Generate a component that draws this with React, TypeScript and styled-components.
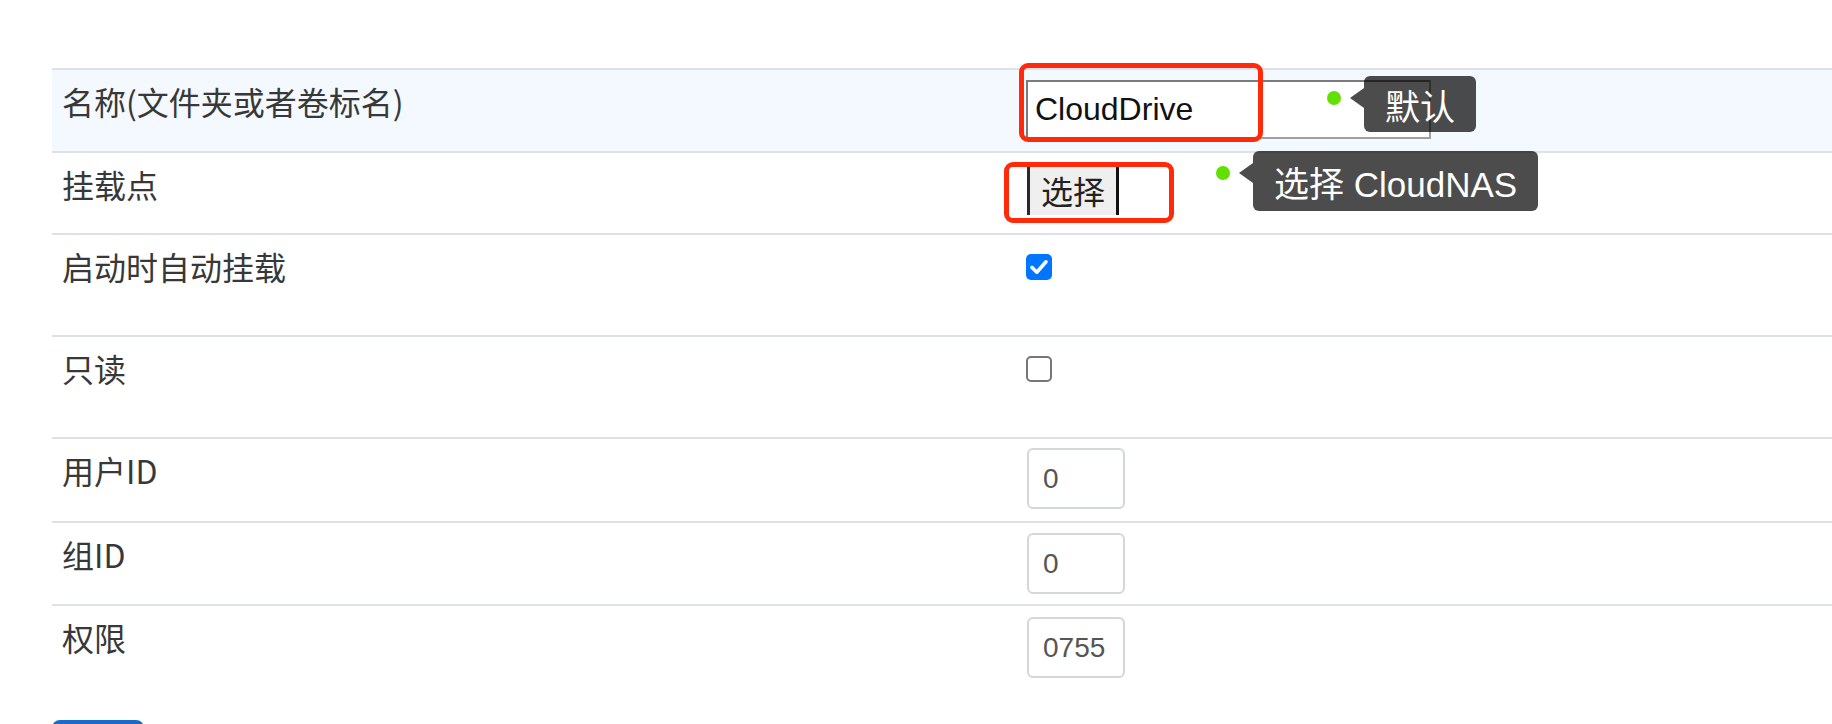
import React from 'react';
import styled, { createGlobalStyle } from 'styled-components';

const GlobalStyle = createGlobalStyle`
  html, body {
    margin: 0;
    padding: 0;
    background: #fff;
    overflow: hidden;
  }
`;

type Field =
  | { kind: 'text'; label: string; value: string }
  | { kind: 'picker'; label: string }
  | { kind: 'check'; label: string; checked: boolean }
  | { kind: 'number'; label: string; value: string };

// each row: field, row height (incl. top border), value padding-top
const ROWS: { field: Field; h: number; pt: number }[] = [
  { field: { kind: 'text', label: '名称(文件夹或者卷标名)', value: 'CloudDrive' }, h: 83, pt: 10 },
  { field: { kind: 'picker', label: '挂载点' }, h: 82, pt: 12 },
  { field: { kind: 'check', label: '启动时自动挂载', checked: true }, h: 102, pt: 19 },
  { field: { kind: 'check', label: '只读', checked: false }, h: 102, pt: 19 },
  { field: { kind: 'number', label: '用户ID', value: '0' }, h: 84, pt: 9 },
  { field: { kind: 'number', label: '组ID', value: '0' }, h: 83, pt: 10 },
  { field: { kind: 'number', label: '权限', value: '0755' }, h: 85, pt: 11 },
];

// COMPONENT
export default function App() {
  const renderValue = (f: Field) => {
    switch (f.kind) {
      case 'text':
        return <TextInput defaultValue={f.value} />;
      case 'picker':
        return <PickButton>选择</PickButton>;
      case 'check':
        return (
          <CheckBox $checked={f.checked}>
            {f.checked && (
              <svg width="26" height="26" viewBox="0 0 26 26">
                <path d="M6 13.5 L10.8 18.2 L20 7.8" fill="none" stroke="#fff" strokeWidth="3.6" strokeLinecap="round" strokeLinejoin="round" />
              </svg>
            )}
          </CheckBox>
        );
      case 'number':
        return <NumberInput defaultValue={f.value} />;
    }
  };

  return (
    <Page>
      <GlobalStyle />
      <Table>
        {ROWS.map(({ field, h, pt }, i) => (
          <Row key={field.label} $h={h} $shade={i === 0}>
            <LabelCell>{field.label}</LabelCell>
            <ValueCell $pt={pt}>{renderValue(field)}</ValueCell>
          </Row>
        ))}
      </Table>
      <SaveButton aria-label="保存" />

      {/* annotation layer: red marks + guide callouts */}
      <Mark style={{ left: 1019, top: 63, width: 244, height: 79 }} />
      <Mark style={{ left: 1004, top: 162, width: 170, height: 61 }} />
      <Callout style={{ left: 1327, top: 76 }}>
        <Dot />
        <Tip $h={56}>默认</Tip>
      </Callout>
      <Callout style={{ left: 1216, top: 151 }}>
        <Dot />
        <Tip $h={60}>选择 CloudNAS</Tip>
      </Callout>
    </Page>
  );
}

// STYLING
const Page = styled.div`
  position: relative;
  padding: 68px 0 0 52px;
  font-family: "Noto Sans CJK SC", "Noto Sans", sans-serif;
  color: #333;
`;
const Table = styled.div`
  width: 1780px;
`;
const Row = styled.div<{ $h: number; $shade?: boolean }>`
  display: grid;
  grid-template-columns: 974px 1fr;
  box-sizing: border-box;
  height: ${p => p.$h}px;
  border-top: 2px solid #dee2e6;
  background: ${p => (p.$shade ? '#f3f9fe' : '#fff')};
`;
const LabelCell = styled.div`
  padding: 7px 10px 0;
  font-size: 32px;
  line-height: 48px;
  color: #383838;
`;
const ValueCell = styled.div<{ $pt: number }>`
  padding-top: ${p => p.$pt}px;
  display: flex;
  align-items: flex-start;
`;
const TextInput = styled.input`
  box-sizing: border-box;
  width: 405px;
  height: 59px;
  margin: 0;
  padding: 0 7px;
  border: 2px solid #7b7b7b;
  border-bottom-color: #a0a0a0;
  border-right-color: #a0a0a0;
  background: #fff;
  font-family: "Liberation Sans", Arial, sans-serif;
  font-size: 32px;
  color: #111;
  outline: none;
`;
const PickButton = styled.button`
  box-sizing: border-box;
  height: 50px;
  margin: 0 0 0 1px;
  padding: 0 11px;
  border: none;
  border-left: 3px solid #2a2a2a;
  border-right: 3px solid #111;
  background: #efefef;
  font-family: "Noto Sans CJK SC", sans-serif;
  font-size: 32px;
  line-height: 50px;
  color: #222;
`;
const CheckBox = styled.span<{ $checked: boolean }>`
  box-sizing: border-box;
  display: block;
  width: 26px;
  height: 26px;
  border-radius: 5px;
  background: ${p => (p.$checked ? '#0075ff' : '#fff')};
  border: ${p => (p.$checked ? 'none' : '2px solid #767676')};
  svg {
    display: block;
  }
`;
const NumberInput = styled.input`
  box-sizing: border-box;
  width: 98px;
  height: 61px;
  margin: 0 0 0 1px;
  padding: 0 14px;
  border: 2px solid #d3d7dc;
  border-radius: 6px;
  background: #fff;
  font-family: "Liberation Sans", Arial, sans-serif;
  font-size: 28px;
  color: #555;
  outline: none;
`;
const SaveButton = styled.button`
  display: block;
  margin-top: 31px;
  width: 92px;
  height: 60px;
  border: none;
  border-radius: 8px;
  background: #1b6ac9;
`;
const Mark = styled.div`
  position: absolute;
  box-sizing: border-box;
  border: 5px solid #ff2a0a;
  border-radius: 9px;
  pointer-events: none;
`;
const Callout = styled.div`
  position: absolute;
  display: flex;
  align-items: flex-start;
  gap: 23px;
`;
const Dot = styled.div`
  flex: none;
  margin-top: 15px;
  width: 14px;
  height: 14px;
  border-radius: 50%;
  background: #62e000;
`;
const Tip = styled.div<{ $h: number }>`
  position: relative;
  box-sizing: border-box;
  height: ${p => p.$h}px;
  display: flex;
  align-items: center;
  padding: 0 21px;
  background: rgba(0, 0, 0, 0.7);
  border-radius: 6px;
  color: #fff;
  font-family: "Liberation Sans", "Noto Sans CJK SC", sans-serif;
  font-size: 35px;
  white-space: nowrap;
  &::before {
    content: '';
    position: absolute;
    left: -14px;
    top: 12px;
    border-style: solid;
    border-width: 10px 14px 10px 0;
    border-color: transparent rgba(0, 0, 0, 0.7) transparent transparent;
  }
`;
